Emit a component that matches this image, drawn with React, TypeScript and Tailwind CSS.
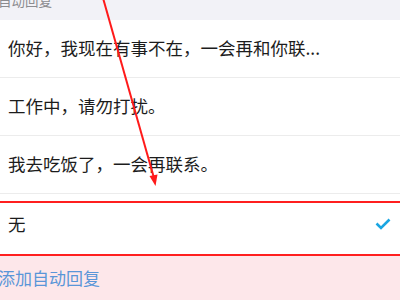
import React from "react";

const replies = [
  "你好，我现在有事不在，一会再和你联...",
  "工作中，请勿打扰。",
  "我去吃饭了，一会再联系。",
];

export default function App() {
  return (
    <div
      className="relative h-[300px] w-[400px] overflow-hidden bg-white text-[#1c1c1c]"
      style={{ fontFamily: '"Noto Sans CJK SC", "Noto Sans", sans-serif' }}
    >
      {/* Section header */}
      <div className="flex h-5 bg-[#f2f2f7]">
        <span className="-ml-[2px] -mt-[6px] text-[13.5px] leading-[13px] text-[#8c8c90]">自动回复</span>
      </div>

      {/* Reply list */}
      {replies.map((r) => (
        <div key={r} className="flex h-[58px] items-center border-b border-[#ececec] pl-2">
          <span className="whitespace-nowrap text-[17.5px]">{r}</span>
        </div>
      ))}

      {/* None option (selected) */}
      <div className="relative flex h-[61px] items-center justify-between pl-2 pr-[9px]">
        <span className="text-[17.5px]">无</span>
        <svg width="16" height="12" viewBox="0 0 16 12" className="mb-[2px]">
          <path d="M1.5 5.5 L6 10 L14.5 1.5" fill="none" stroke="#1aa6e2" strokeWidth="2.6" />
        </svg>
        <div className="absolute -left-1 -right-1 top-[7px] bottom-[-1px] border-y-2 border-[#ff1f1f]" />
      </div>

      {/* Add auto reply */}
      <div className="flex h-[45px] items-center bg-[#fde7ea]">
        <span className="-ml-[2px] text-[17px] text-[#5a96d8]">添加自动回复</span>
      </div>

      {/* Annotation arrow */}
      <svg className="pointer-events-none absolute left-0 top-0" width="400" height="300">
        <line x1="103" y1="-2" x2="154" y2="178" stroke="#ff1a1a" strokeWidth="2" />
        <path d="M149.5 176 L155.5 186 L157.5 174.5 Z" fill="#ff1a1a" />
      </svg>
    </div>
  );
}
